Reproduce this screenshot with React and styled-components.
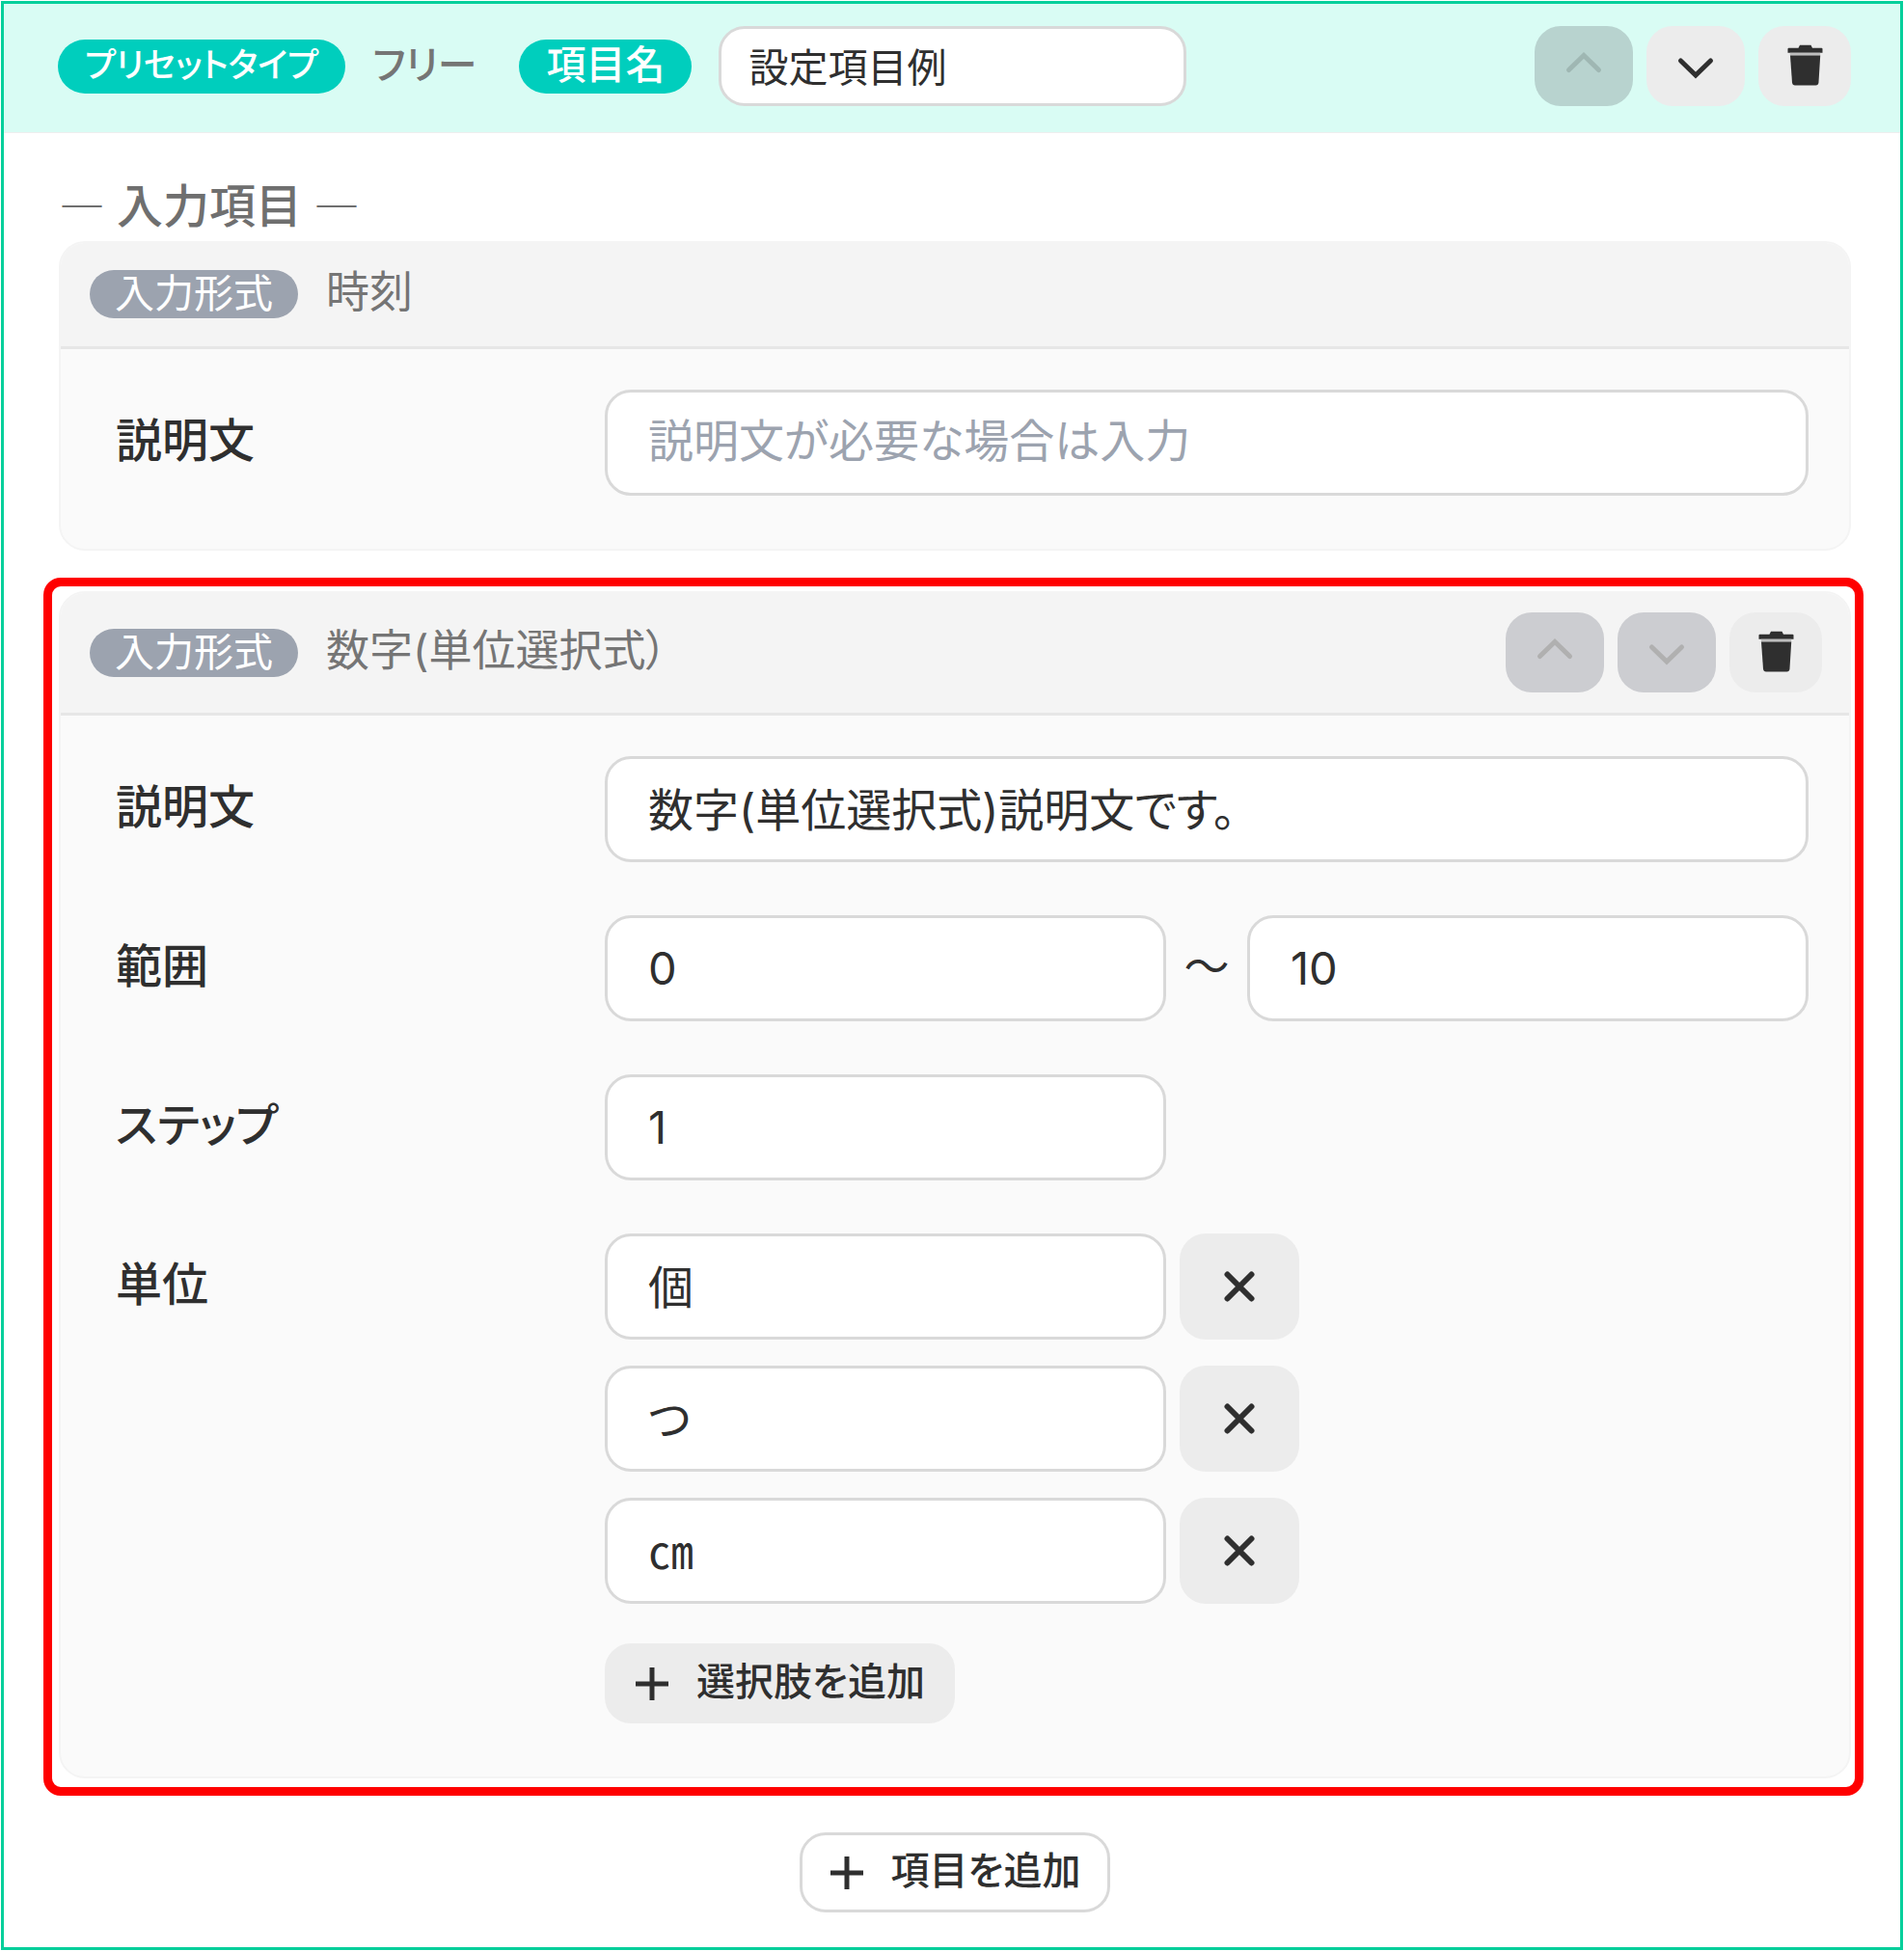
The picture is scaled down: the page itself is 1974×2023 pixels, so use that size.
import React, { useState } from "react";
import styled, { createGlobalStyle, css } from "styled-components";

const GlobalStyle = createGlobalStyle`
  *, *::before, *::after {
    box-sizing: border-box;
  }
  body {
    margin: 0;
    background: #fff;
    color: #2f2f2f;
    font-family: "Inter", "Noto Sans CJK JP", sans-serif;
    font-feature-settings: "palt";
    font-size: 47px;
    line-height: 70px;
  }
  button, input {
    margin: 0;
    color: inherit;
    font: inherit;
    font-feature-settings: inherit;
  }
`;

const Frame = styled.main`
  margin: 1px;
  border: 3px solid #06cf9b;
  background: #fff;
`;

const Header = styled.header`
  display: flex;
  align-items: center;
  gap: 28px;
  padding: 23px 51px 27px 56px;
  border-bottom: 1px solid #eeeeee;
  background: #d9fcf4;
`;

const pill = css`
  flex: none;
  border-radius: 28px;
  color: #fff;
  font-size: 41px;
  white-space: nowrap;
`;

const Pill = styled.span`
  ${pill}
  padding: 0 28px 4px;
  background: #00cebd;
  font-size: ${(p) => (p.$compact ? "35px" : "41px")};
  font-weight: 500;
  line-height: 52px;
`;

const PillLabel = styled(Pill).attrs({ as: "label" })``;

const FormatPill = styled.span`
  ${pill}
  padding: 0 26px 2px;
  background: #9ca3af;
  line-height: 48px;
`;

const PresetName = styled.span`
  margin-right: 16px;
  padding-bottom: 4px;
  color: #757575;
  font-size: 41px;
  font-weight: 500;
  white-space: nowrap;
`;

const TextInput = styled.input`
  display: block;
  width: 100%;
  min-width: 0;
  height: 110px;
  border: 3px solid #d9d9d9;
  border-radius: 27px;
  padding: 0 42px ${(p) => (p.inputMode === "numeric" ? "2px" : "6px")};
  background: #fff;
  outline: none;

  &::placeholder {
    color: #9ca3af;
    opacity: 1;
  }
`;

const NameInput = styled(TextInput)`
  flex: 0 1 485px;
  height: 83px;
  padding: 0 28px 4px;
  font-size: 41px;
`;

const Actions = styled.div`
  display: flex;
  gap: 14px;
  margin-left: auto;
`;

const Button = styled.button`
  display: flex;
  flex: none;
  align-items: center;
  justify-content: center;
  height: 83px;
  border: 0;
  border-radius: 27px;
  padding: 0;
  background: #ececec;
  cursor: pointer;
`;

const IconButton = styled(Button)`
  width: ${(p) => (p.$narrow ? "96px" : "102px")};

  &:disabled {
    background: ${(p) => (p.$onTint ? "#b8d3cf" : "#cccdd1")};
    color: ${(p) => (p.$onTint ? "#9fb7b3" : "#b0b0b0")};
    cursor: default;
  }
`;

const RemoveButton = styled(Button)`
  width: 124px;
  height: 110px;
`;

const AddButton = styled(Button)`
  gap: 22px;
  border: 3px solid ${(p) => (p.$outlined ? "#d9d9d9" : "#ececec")};
  padding: 0 28px 0 22px;
  background: ${(p) => (p.$outlined ? "#fff" : "#ececec")};
  font-size: 40px;
  font-weight: 500;
  white-space: nowrap;
`;

const ButtonText = styled.span`
  padding-bottom: 4px;
`;

const Icon = styled.svg`
  display: block;
  width: 48px;
  height: 48px;
  fill: none;
  stroke: currentColor;
  stroke-width: 5;
  stroke-linecap: round;
`;

const Section = styled.section`
  display: flex;
  flex-direction: column;
  padding: 41px 51px 36px 57px;
`;

const SectionTitle = styled.h2`
  display: flex;
  gap: 12px;
  margin: 0 0 1px;
  color: #6f6f6f;
  font-size: 48px;
  font-weight: 500;
`;

const Dash = styled.span`
  font-family: "Noto Sans CJK JP", sans-serif;
  font-feature-settings: normal;
  font-weight: 400;
  line-height: 64px;
`;

const CardList = styled.div`
  display: flex;
  flex-direction: column;
  gap: 42px;
`;

const Card = styled.article`
  position: relative;
  border: 2px solid #f4f4f4;
  border-radius: 27px;
  background: #fafafa;

  ${(p) =>
    p.$highlighted &&
    css`
      &::after {
        content: "";
        position: absolute;
        inset: -16px -15px -20px -18px;
        border: 9px solid #ff0000;
        border-radius: 18px;
        pointer-events: none;
      }
    `}
`;

const CardHead = styled.div`
  display: flex;
  align-items: center;
  gap: 29px;
  border-bottom: 3px solid #e6e6e6;
  border-radius: 25px 25px 0 0;
  padding: 20px 28px 21px 30px;
  background: #f4f4f4;
`;

const FormatName = styled.span`
  padding-bottom: 4px;
  color: #757575;
  font-size: 45px;
  line-height: 62px;
`;

const CardBody = styled.div`
  display: flex;
  flex-direction: column;
  gap: 55px;
  padding: 42px 42px 55px 57px;
`;

const Field = styled.div`
  display: grid;
  grid-template-columns: 507px minmax(0, 1fr);
  align-items: start;
`;

const FieldLabel = styled.label`
  font-size: 48px;
  font-weight: 500;
  line-height: 106px;
`;

const Pair = styled.div`
  display: grid;
  grid-template-columns: minmax(0, 1fr) 84px minmax(0, 1fr);
  align-items: center;
`;

const Tilde = styled.span`
  padding-bottom: 4px;
  text-align: center;
  font-feature-settings: normal;
`;

const Units = styled.div`
  display: flex;
  flex-direction: column;
  align-items: flex-start;
  gap: 41px;
`;

const UnitList = styled.ul`
  display: flex;
  flex-direction: column;
  gap: 27px;
  width: 100%;
  margin: 0;
  padding: 0;
  list-style: none;
`;

const UnitItem = styled.li`
  display: flex;
  gap: 14px;

  & > input {
    width: calc(50% - 42px);
  }
`;

const Footer = styled.div`
  display: flex;
  justify-content: center;
  padding-top: 56px;
`;

const UpIcon = () => (
  <Icon viewBox="0 0 48 48" aria-hidden="true">
    <path d="M8.5 27.5 24 12.5 39.5 27.5" />
  </Icon>
);

const DownIcon = () => (
  <Icon viewBox="0 0 48 48" aria-hidden="true">
    <path d="M8.5 18 24 33 39.5 18" />
  </Icon>
);

const TrashIcon = () => (
  <Icon viewBox="0 0 48 48" aria-hidden="true">
    <path
      d="M17.5 4.7 19 1.8H30.5L32 4.7H41.5Q42.5 4.7 42.5 5.7V9.8H6.5V5.7Q6.5 4.7 7.5 4.7Z"
      fill="currentColor"
      stroke="none"
    />
    <path d="M8.8 9.8H40.2V12.5H8.8Z" fill="#bdbdbd" stroke="none" />
    <path
      d="M9 12.5H40.2L38.5 40.5Q38.2 43.5 35.5 43.5H14Q11.3 43.5 11 40.5Z"
      fill="currentColor"
      stroke="none"
    />
  </Icon>
);

const CloseIcon = () => (
  <Icon viewBox="0 0 48 48" aria-hidden="true">
    <path d="M11.5 11.5 36.5 36.5M36.5 11.5 11.5 36.5" strokeWidth="6" />
  </Icon>
);

const PlusIcon = () => (
  <Icon viewBox="0 0 48 48" aria-hidden="true">
    <path d="M24 7V41M7 24H41" strokeLinecap="butt" />
  </Icon>
);

function OrderActions({ upDisabled, downDisabled, onTint }) {
  return (
    <Actions>
      <IconButton type="button" aria-label="上へ移動" disabled={upDisabled} $onTint={onTint}>
        <UpIcon />
      </IconButton>
      <IconButton type="button" aria-label="下へ移動" disabled={downDisabled} $onTint={onTint}>
        <DownIcon />
      </IconButton>
      <IconButton type="button" aria-label="削除" $narrow>
        <TrashIcon />
      </IconButton>
    </Actions>
  );
}

export default function App() {
  const [units, setUnits] = useState(["個", "つ", "㎝"]);

  const changeUnit = (index, value) =>
    setUnits(units.map((unit, i) => (i === index ? value : unit)));
  const removeUnit = (index) => setUnits(units.filter((_, i) => i !== index));

  return (
    <>
      <GlobalStyle />
      <Frame lang="ja">
        <Header>
          <Pill $compact>プリセットタイプ</Pill>
          <PresetName>フリー</PresetName>
          <PillLabel htmlFor="item-name">項目名</PillLabel>
          <NameInput id="item-name" type="text" defaultValue="設定項目例" />
          <OrderActions upDisabled onTint />
        </Header>

        <Section>
          <SectionTitle>
            <Dash>―</Dash>
            入力項目
            <Dash>―</Dash>
          </SectionTitle>

          <CardList>
            <Card>
              <CardHead>
                <FormatPill>入力形式</FormatPill>
                <FormatName>時刻</FormatName>
              </CardHead>
              <CardBody>
                <Field>
                  <FieldLabel htmlFor="time-note">説明文</FieldLabel>
                  <TextInput id="time-note" type="text" placeholder="説明文が必要な場合は入力" />
                </Field>
              </CardBody>
            </Card>

            <Card $highlighted>
              <CardHead>
                <FormatPill>入力形式</FormatPill>
                <FormatName>数字(単位選択式）</FormatName>
                <OrderActions upDisabled downDisabled />
              </CardHead>
              <CardBody>
                <Field>
                  <FieldLabel htmlFor="number-note">説明文</FieldLabel>
                  <TextInput
                    id="number-note"
                    type="text"
                    defaultValue="数字(単位選択式)説明文です。"
                  />
                </Field>
                <Field>
                  <FieldLabel htmlFor="range-min">範囲</FieldLabel>
                  <Pair>
                    <TextInput id="range-min" type="text" inputMode="numeric" defaultValue="0" />
                    <Tilde>～</Tilde>
                    <TextInput
                      type="text"
                      inputMode="numeric"
                      aria-label="範囲の上限"
                      defaultValue="10"
                    />
                  </Pair>
                </Field>
                <Field>
                  <FieldLabel htmlFor="step">ステップ</FieldLabel>
                  <Pair>
                    <TextInput id="step" type="text" inputMode="numeric" defaultValue="1" />
                  </Pair>
                </Field>
                <Field>
                  <FieldLabel htmlFor="unit-0">単位</FieldLabel>
                  <Units>
                    <UnitList>
                      {units.map((unit, index) => (
                        <UnitItem key={index}>
                          <TextInput
                            id={`unit-${index}`}
                            type="text"
                            aria-label={`単位 ${index + 1}`}
                            value={unit}
                            onChange={(event) => changeUnit(index, event.target.value)}
                          />
                          <RemoveButton
                            type="button"
                            aria-label="選択肢を削除"
                            onClick={() => removeUnit(index)}
                          >
                            <CloseIcon />
                          </RemoveButton>
                        </UnitItem>
                      ))}
                    </UnitList>
                    <AddButton type="button" onClick={() => setUnits([...units, ""])}>
                      <PlusIcon />
                      <ButtonText>選択肢を追加</ButtonText>
                    </AddButton>
                  </Units>
                </Field>
              </CardBody>
            </Card>
          </CardList>

          <Footer>
            <AddButton type="button" $outlined>
              <PlusIcon />
              <ButtonText>項目を追加</ButtonText>
            </AddButton>
          </Footer>
        </Section>
      </Frame>
    </>
  );
}
